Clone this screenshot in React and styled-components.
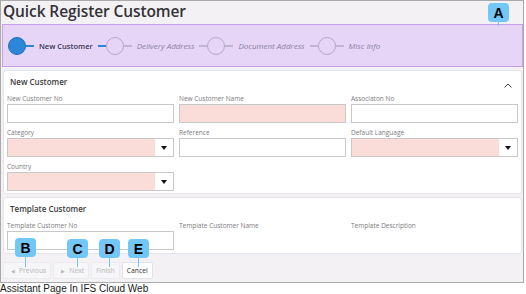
import React from 'react';
import styled, { createGlobalStyle } from 'styled-components';

const Global = createGlobalStyle`
  html, body { margin: 0; padding: 0; background: #ffffff; }
  body { font-family: "Open Sans", "Liberation Sans", sans-serif; }
  * { box-sizing: border-box; }
`;

const steps = [
  { label: 'New Customer', active: true },
  { label: 'Delivery Address' },
  { label: 'Document Address' },
  { label: 'Misc Info' },
];

const Stepper = () => (
  <StepBand>
    {steps.map((s, i) => (
      <React.Fragment key={s.label}>
        {i > 0 && <Line $on={steps[i - 1].active} />}
        <Circle $on={s.active} />
        <Line $on={s.active} />
        <StepLabel $on={s.active}>{s.label}</StepLabel>
      </React.Fragment>
    ))}
  </StepBand>
);

const Field = ({ label, required, select }) => (
  <FieldBox>
    <Label>{label}</Label>
    <Input $required={required}>
      {select && (
        <Drop>
          <svg width="6" height="4" viewBox="0 0 6 4"><path d="M0 0h6L3 4z" fill="#111" /></svg>
        </Drop>
      )}
    </Input>
  </FieldBox>
);

export default function App() {
  return (
    <>
      <Global />
      <Frame>
        <Title>Quick Register Customer</Title>
        <Stepper />
        <Card $h={124}>
          <CardHead>
            New Customer
            <svg width="8" height="5" viewBox="0 0 8 5">
              <path d="M0.5 4.5L4 1l3.5 3.5" fill="none" stroke="#444" strokeWidth="1" />
            </svg>
          </CardHead>
          <Grid>
            <Field label="New Customer No" />
            <Field label="New Customer Name" required />
            <Field label="Associaton No" />
            <Field label="Category" required select />
            <Field label="Reference" />
            <Field label="Default Language" required select />
            <Field label="Country" required select />
          </Grid>
        </Card>
        <Card $h={57}>
          <CardHead>Template Customer</CardHead>
          <Grid>
            <Field label="Template Customer No" />
            <FieldBox><Label>Template Customer Name</Label></FieldBox>
            <FieldBox><Label>Template Description</Label></FieldBox>
          </Grid>
        </Card>
        <Footer>
          <Button $icon><Tri>◀</Tri>Previous</Button>
          <Button $icon><Tri>▶</Tri>Next</Button>
          <Button>Finish</Button>
          <Button $primary>Cancel</Button>
        </Footer>

        <Badge $x={487} $y={2} $stem={4}>A</Badge>
        <Badge $x={14} $y={237} $stem={10}>B</Badge>
        <Badge $x={66} $y={238} $stem={9}>C</Badge>
        <Badge $x={98} $y={238} $stem={9}>D</Badge>
        <Badge $x={127} $y={238} $stem={9}>E</Badge>
      </Frame>
      <Caption>Assistant Page In IFS Cloud Web</Caption>
    </>
  );
}

const Frame = styled.div`
  position: relative;
  width: 524px;
  height: 283px;
  border: 1px solid #a9a9a9;
  background: #f3f1f4;
  display: flex;
  flex-direction: column;
`;

const Title = styled.div`
  height: 23px;
  padding-left: 2px;
  font-size: 15.5px;
  font-weight: 600;
  letter-spacing: -0.1px;
  line-height: 21px;
  color: #333237;
`;

const StepBand = styled.div`
  height: 43px;
  margin: 0 0 0 1px;
  background: #e7d5f8;
  border: 1px solid #c79fe9;
  display: flex;
  align-items: center;
  padding-left: 5px;
`;

const Circle = styled.div`
  width: 18px;
  height: 18px;
  border-radius: 50%;
  flex: none;
  background: ${p => (p.$on ? '#2d87d9' : 'transparent')};
  border: 1px solid ${p => (p.$on ? '#1f6fbf' : '#b8a8cc')};
`;

const Line = styled.div`
  width: 8px;
  height: 2px;
  flex: none;
  background: ${p => (p.$on ? '#2d87d9' : '#c2b4d2')};
`;

const StepLabel = styled.span`
  margin: 0 5px;
  font-size: ${p => (p.$on ? '7.5px' : '8px')};
  font-weight: ${p => (p.$on ? 600 : 400)};
  font-style: ${p => (p.$on ? 'normal' : 'italic')};
  color: ${p => (p.$on ? '#3a3552' : '#8b7f9c')};
  white-space: nowrap;
`;

const Card = styled.div`
  height: ${p => p.$h}px;
  margin: 3px 1px 0 2px;
  background: #ffffff;
  border: 1px solid #e6e3e9;
  border-radius: 3px;
  padding: 0 3px;
`;

const CardHead = styled.div`
  height: 20px;
  padding: 0 3px;
  display: flex;
  align-items: center;
  justify-content: space-between;
  font-size: 8px;
  font-weight: 600;
  color: #3b3b40;
  svg { margin-top: 8px; margin-right: 3px; }
`;

const Grid = styled.div`
  display: grid;
  grid-template-columns: repeat(3, 167px);
  column-gap: 5px;
  row-gap: 6px;
  margin-top: 4px;
`;

const FieldBox = styled.div`
  display: flex;
  flex-direction: column;
`;

const Label = styled.div`
  height: 9px;
  font-size: 6.5px;
  line-height: 8px;
  color: #7d7b80;
  white-space: nowrap;
`;

const Input = styled.div`
  position: relative;
  height: 19px;
  border: 1px solid #c8c8c8;
  background: ${p => (p.$required ? '#fadcd8' : '#ffffff')};
`;

const Drop = styled.div`
  position: absolute;
  right: 0;
  top: 0;
  bottom: 0;
  width: 18px;
  background: #ffffff;
  display: flex;
  align-items: center;
  justify-content: center;
  padding-top: 1px;
`;

const Footer = styled.div`
  flex: 1;
  display: flex;
  align-items: flex-start;
  gap: 2px;
  padding: 8px 0 0 2px;
`;

const Button = styled.div`
  height: 17px;
  padding: 0 4px 0 ${p => (p.$icon ? '7px' : '4px')};
  display: flex;
  align-items: center;
  gap: 4px;
  font-size: 6.8px;
  border-radius: 2px;
  border: 1px solid ${p => (p.$primary ? '#e4e2e6' : '#eceaee')};
  background: ${p => (p.$primary ? '#ffffff' : '#f6f5f7')};
  color: ${p => (p.$primary ? '#333' : '#b9b8bc')};
`;

const Tri = styled.span`
  font-size: 5px;
`;

const Badge = styled.div`
  position: absolute;
  left: ${p => p.$x}px;
  top: ${p => p.$y}px;
  width: 21px;
  height: 19px;
  border-radius: 4px;
  background: #73c7f7;
  display: flex;
  align-items: center;
  justify-content: center;
  font-family: "Liberation Sans", Arial, sans-serif;
  font-weight: 700;
  font-size: 14px;
  color: #000;
  &::after {
    content: '';
    position: absolute;
    left: 10px;
    top: 19px;
    width: 1px;
    height: ${p => p.$stem}px;
    background: #73c7f7;
  }
`;

const Caption = styled.div`
  font-family: "Liberation Sans", Arial, sans-serif;
  font-size: 10px;
  line-height: 11px;
  color: #1a1a1a;
`;
